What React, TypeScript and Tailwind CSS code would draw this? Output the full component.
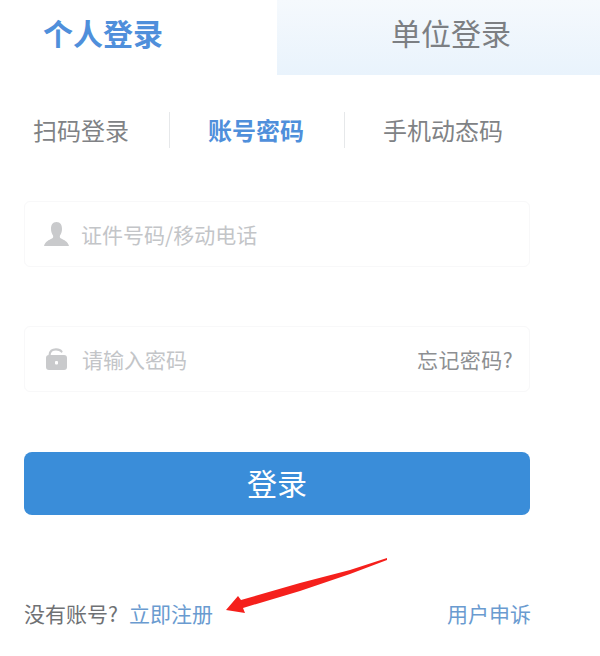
const font = "font-['Microsoft_YaHei','Noto_Sans_CJK_SC','Liberation_Sans',sans-serif]"

function UserIcon() {
  return (
    <svg viewBox="0 0 25 24" className="w-[25px] h-[24px] fill-[#c9cacc]">
      <path d="M12.500 0C8.500 0 7 3 7 7c0 3 1 5 2 6.500.5 1.500 0 2.500-1 3C5 18 1 19.500 0 24h25c-1-4.500-5-6-8-7.500-1-.5-1.500-1.500-1-3 1-1.500 2-3.500 2-6.500 0-4-1.500-7-5.500-7z" />
    </svg>
  )
}

function OpenLockIcon() {
  return (
    <svg viewBox="0 0 21 22" className="w-[21px] h-[22px]">
      <path d="M3.500 7.500C3.500 3 6.500 1.300 10 1.300c2.500 0 4.500.7 5.500 2.200" fill="none" stroke="#c9cacc" strokeWidth="2.200" strokeLinecap="round" />
      <rect x="0" y="7" width="21" height="15" rx="3" fill="#c9cacc" />
      <rect x="9" y="13" width="3" height="3.500" rx="1" fill="#fff" />
    </svg>
  )
}

export default function App() {
  return (
    <div className={`relative w-[600px] h-[656px] bg-white overflow-hidden ${font}`}>
      {/* top tabs */}
      <div className="flex h-[75px]">
        <div className="w-[277px] pl-[43px] pt-[11px] text-[30px] leading-[42px] font-bold text-[#4f8fdb]">个人登录</div>
        <div className="flex-1 pl-[114px] pt-[11px] text-[30px] leading-[42px] text-[#7c7f83] bg-gradient-to-b from-[#f5f9fd] to-[#e9f3fc]">单位登录</div>
      </div>

      {/* login type */}
      <div className="flex items-center h-[36px] mt-[37px] text-[24px] text-[#808285]">
        <div className="w-[169px] pl-[33px]">扫码登录</div>
        <div className="w-[176px] h-full flex items-center border-l border-r border-[#e6e8ea] pl-[38px] font-bold text-[#4f8fdb]">账号密码</div>
        <div className="pl-[38px]">手机动态码</div>
      </div>

      {/* fields */}
      <div className="flex flex-col gap-[59px] w-[506px] ml-[24px] mt-[53px]">
        <div className="flex items-center h-[66px] pl-[19px] border border-[#f8f8f9] rounded-[6px]">
          <UserIcon />
          <span className="ml-[12px] mt-[2px] text-[21px] text-[#c3c5c8]">证件号码/移动电话</span>
        </div>
        <div className="flex items-center h-[66px] pl-[21px] pr-[16px] border border-[#f8f8f9] rounded-[6px]">
          <OpenLockIcon />
          <span className="ml-[15px] mt-[2px] text-[21px] text-[#c3c5c8]">请输入密码</span>
          <span className="ml-auto mt-[2px] text-[21px] tracking-[0.4px] text-[#8d8f92]">忘记密码?</span>
        </div>
      </div>

      <div className="flex items-center justify-center w-[506px] h-[63px] ml-[24px] mt-[60px] pb-[2px] rounded-[8px] bg-[#3a8dd9] text-[30px] text-white">登录</div>

      {/* bottom links */}
      <div className="flex items-center w-[507px] ml-[24px] mt-[83px] text-[21px] leading-[30px]">
        <span className="text-[#6f7174]">没有账号?</span>
        <span className="ml-[11px] text-[#6a9bd0]">立即注册</span>
        <span className="ml-auto text-[#6a9bd0]">用户申诉</span>
      </div>

      {/* annotation arrow */}
      <svg viewBox="0 0 600 656" className="absolute inset-0 w-[600px] h-[656px] pointer-events-none">
        <path d="M387 558 L350 570 L300 583 L241 600 L238 596 L226 610 L245 613 L243 608 L300 591 L350 574 L387 560 Z" fill="#f5201c" />
      </svg>
    </div>
  )
}
